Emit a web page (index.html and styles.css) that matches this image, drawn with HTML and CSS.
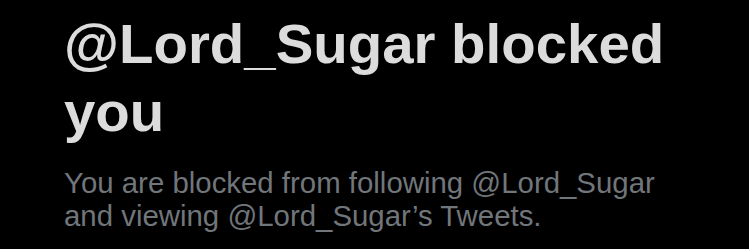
FILE: index.html
```html
<!DOCTYPE html>
<html lang="en">
<head>
    <meta charset="UTF-8">
    <title>Blocked</title>
    <link rel="stylesheet" href="styles.css">
</head>
<body>
    <div class="blocked">
        <h1 class="blocked-title">@Lord_Sugar blocked you</h1>
        <p class="blocked-text">You are blocked from following @Lord_Sugar and viewing @Lord_Sugar’s Tweets.</p>
    </div>
</body>
</html>
```

FILE: styles.css
```css
body {
    margin: 0;
    background: #000;
    font-family: "Liberation Sans", Arial, sans-serif;
}

.blocked {
    padding: 10px 0 0 64px;
    width: 620px;
}

.blocked-title {
    margin: 0;
    font-size: 56.4px;
    line-height: 68px;
    font-weight: bold;
    color: #dcdcdc;
}

.blocked-text {
    margin: 20px 0 0;
    font-size: 29.4px;
    line-height: 33px;
    color: #71767b;
}
```
